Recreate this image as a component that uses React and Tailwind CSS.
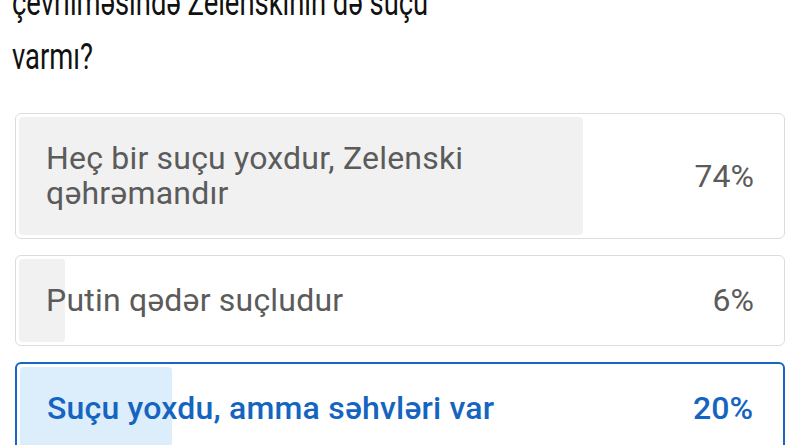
const options = [
  { id: 1, lines: ['Heç bir suçu yoxdur, Zelenski', 'qəhrəmandır'], pct: 74, selected: false },
  { id: 2, lines: ['Putin qədər suçludur'], pct: 6, selected: false },
  { id: 3, lines: ['Suçu yoxdu, amma səhvləri var'], pct: 20, selected: true },
];

function PollOption({ option }) {
  const { lines, pct, selected } = option;
  return (
    <div
      className={
        selected
          ? 'relative rounded-[6px] border-2 border-[#1666c5] bg-white p-[3px]'
          : 'relative rounded-[6px] border border-[#dcdcdc] bg-white p-[3px]'
      }
    >
      {/* result bar */}
      <div className="absolute inset-[3px]">
        <div
          className={selected ? 'h-full rounded-[4px] bg-[#dcedfb]' : 'h-full rounded-[4px] bg-[#f1f1f1]'}
          style={{ width: `${pct}%` }}
        />
      </div>
      <div
        className={
          selected
            ? 'relative flex min-h-[82px] items-center justify-between pl-[27px] pr-[27px] py-[24px] text-[#1565c0] font-medium'
            : 'relative flex min-h-[82px] items-center justify-between pl-[27px] pr-[27px] py-[24px] text-[#5b5b5b]'
        }
      >
        <div className="text-[32px] leading-[35px] tracking-[0.2px]">
          {lines.map((l) => (
            <div key={l}>{l}</div>
          ))}
        </div>
        <div className="text-[32px] leading-[35px]">{pct}%</div>
      </div>
    </div>
  );
}

export default function App() {
  return (
    <div className="h-[445px] w-[800px] overflow-hidden bg-white font-['Roboto',sans-serif]">
      <div className="-mt-[24px] pl-[12px]">
        <div className="origin-left scale-x-[0.74] whitespace-nowrap text-[37px] leading-[54px] text-[#111]">
          <div>çevrilməsində Zelenskinin də suçu</div>
          <div>varmı?</div>
        </div>
      </div>
      <div className="mt-[29px] flex flex-col gap-[16px] px-[15px]">
        {options.map((o) => (
          <PollOption key={o.id} option={o} />
        ))}
      </div>
    </div>
  );
}
